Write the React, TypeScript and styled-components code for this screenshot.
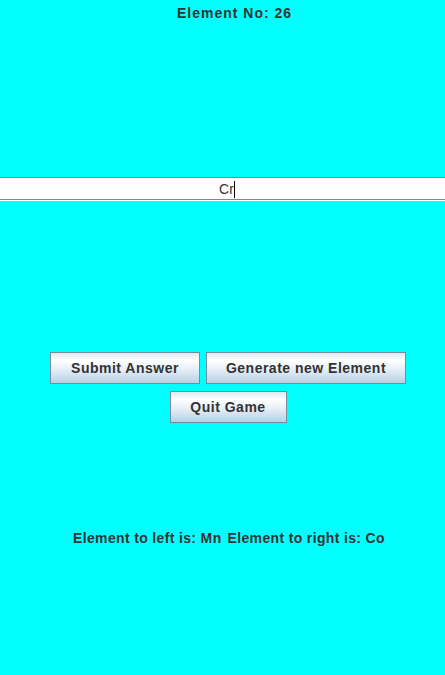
import styled, { createGlobalStyle } from "styled-components";

const GlobalStyle = createGlobalStyle`
  html, body {
    margin: 0;
    padding: 0;
    background: #00ffff;
  }
  body {
    font-family: "Liberation Sans", Arial, sans-serif;
    color: #333333;
  }
`;

const Frame = styled.div`
  width: 445px;
  height: 675px;
  background: #00ffff;
  display: flex;
  flex-direction: column;
  overflow: hidden;
`;

const Title = styled.div`
  padding: 5px 0 0 24px;
  height: 177px;
  box-sizing: border-box;
  text-align: center;
  font-size: 14px;
  font-weight: 700;
  letter-spacing: 1px;
`;

const Field = styled.div`
  height: 24px;
  box-sizing: border-box;
  background: #fff;
  border-top: 1px solid #7a8a99;
  border-bottom: 1px solid #fff;
  box-shadow: inset 0 -1px 0 #7a8a99;
  display: flex;
  justify-content: center;
  align-items: center;
  padding-left: 9px;
  font-size: 14px;
`;

const Caret = styled.span`
  display: inline-block;
  width: 1px;
  height: 17px;
  background: #000;
`;

const Center = styled.div<{ $gap?: number; $top: number }>`
  display: flex;
  justify-content: center;
  gap: ${({ $gap }) => $gap ?? 0}px;
  padding-left: 11px;
  margin-top: ${({ $top }) => $top}px;
`;

const Button = styled.div<{ $w: number }>`
  width: ${({ $w }) => $w}px;
  height: 32px;
  box-sizing: border-box;
  border: 1px solid #7a8a99;
  background: linear-gradient(
    to bottom,
    #dde8f3 0%,
    #ffffff 25%,
    #e6eef7 55%,
    #b8cfe5 100%
  );
  display: flex;
  align-items: center;
  justify-content: center;
  font-size: 14px;
  font-weight: 700;
  letter-spacing: 0.5px;
  color: #333333;
`;

const Neighbours = styled.div`
  display: flex;
  justify-content: center;
  gap: 6px;
  padding-left: 13px;
  margin-top: 107px;
  font-size: 14px;
  font-weight: 700;
  letter-spacing: 0.35px;
`;

export default function App() {
  return (
    <Frame>
      <GlobalStyle />
      <Title>Element No: 26</Title>
      <Field>
        Cr
        <Caret />
      </Field>
      <Center $top={151} $gap={6}>
        <Button $w={150}>Submit Answer</Button>
        <Button $w={200}>Generate new Element</Button>
      </Center>
      <Center $top={7}>
        <Button $w={117}>Quit Game</Button>
      </Center>
      <Neighbours>
        <span>Element to left is: Mn</span>
        <span>Element to right is: Co</span>
      </Neighbours>
    </Frame>
  );
}
